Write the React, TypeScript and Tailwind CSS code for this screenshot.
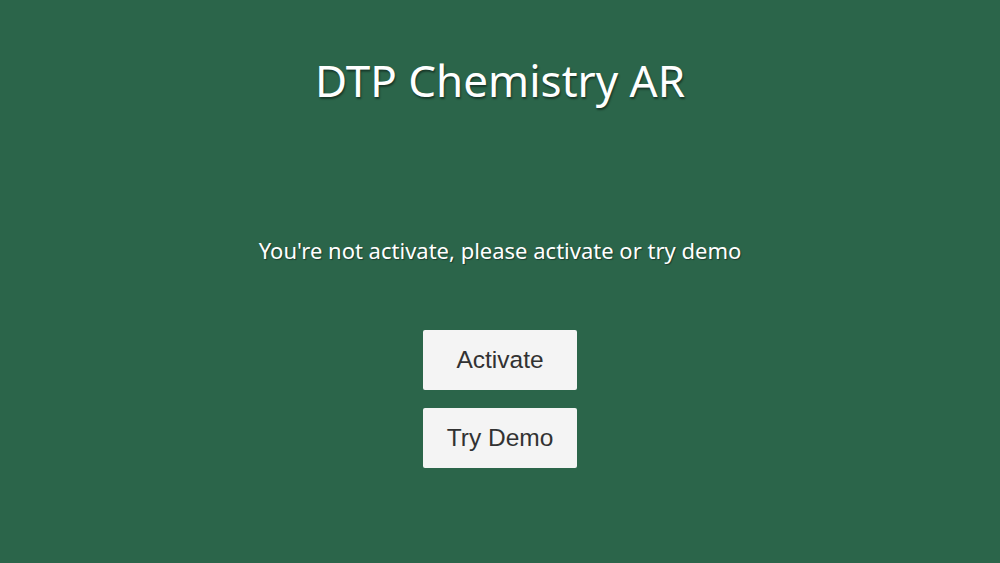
import React from 'react';

const buttons = ["Activate", "Try Demo"];

export default function App() {
  return (
    <div className="w-[1000px] h-[563px] bg-[#2b654a] flex flex-col items-center overflow-hidden font-['Noto_Sans',sans-serif]">
      <h1 className="mt-[50px] text-white text-[44px] leading-[60px] [text-shadow:1px_2px_2px_rgba(0,0,0,0.45)]">
        DTP Chemistry AR
      </h1>
      <p className="mt-[125px] text-white text-[22px] leading-[30px] [text-shadow:1px_1px_1px_rgba(0,0,0,0.4)]">
        You're not activate, please activate or try demo
      </p>
      <div className="mt-[65px] flex flex-col gap-[18px]">
        {buttons.map((label) => (
          <button
            key={label}
            className="w-[154px] h-[60px] bg-[#f4f4f4] rounded-[2px] text-[#323232] text-[24.5px] font-['Liberation_Sans',sans-serif]"
          >
            {label}
          </button>
        ))}
      </div>
    </div>
  );
}
